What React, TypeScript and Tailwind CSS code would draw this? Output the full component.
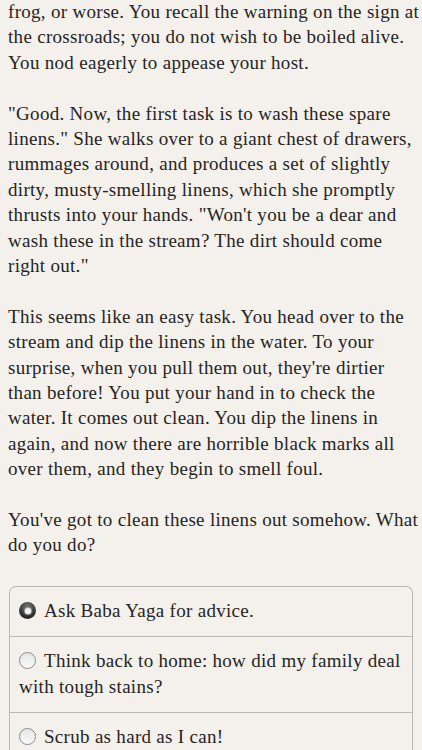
import React from "react";

const paras: string[][] = [
  [
    "frog, or worse. You recall the warning on the sign at",
    "the crossroads; you do not wish to be boiled alive.",
    "You nod eagerly to appease your host.",
  ],
  [
    "\"Good. Now, the first task is to wash these spare",
    "linens.\" She walks over to a giant chest of drawers,",
    "rummages around, and produces a set of slightly",
    "dirty, musty-smelling linens, which she promptly",
    "thrusts into your hands. \"Won't you be a dear and",
    "wash these in the stream? The dirt should come",
    "right out.\"",
  ],
  [
    "This seems like an easy task. You head over to the",
    "stream and dip the linens in the water. To your",
    "surprise, when you pull them out, they're dirtier",
    "than before! You put your hand in to check the",
    "water. It comes out clean. You dip the linens in",
    "again, and now there are horrible black marks all",
    "over them, and they begin to smell foul.",
  ],
  [
    "You've got to clean these linens out somehow. What",
    "do you do?",
  ],
];

function Radio({ checked }: { checked: boolean }) {
  if (checked) {
    return (
      <span className="relative -top-[2px] mr-[8px] inline-flex h-[17px] w-[17px] items-center justify-center rounded-full bg-[radial-gradient(circle_at_50%_30%,#777_0%,#333_60%,#111_100%)] align-middle">
        <span className="h-[6px] w-[6px] rounded-full bg-[#f2f2f2] shadow-[0_0_0_1px_#999]" />
      </span>
    );
  }
  return (
    <span className="relative -top-[2px] mr-[8px] inline-block h-[17px] w-[17px] rounded-full border border-[#8a8a8a] bg-[linear-gradient(#e6e6e6,#fafafa)] align-middle" />
  );
}

const options = [
  { text: "Ask Baba Yaga for advice.", checked: true },
  { text: "Think back to home: how did my family deal", text2: "with tough stains?", checked: false },
  { text: "Scrub as hard as I can!", checked: false },
];

export default function App() {
  return (
    <div
      className="min-h-[750px] w-[422px] overflow-hidden bg-[#f4f1ec] text-[#262422]"
      style={{ fontFamily: '"Liberation Serif", "Times New Roman", serif' }}
    >
      <div className="px-[8px] text-[19px] leading-[25.4px] tracking-[0.3px] -mt-[1px]">
        {paras.map((p, i) => (
          <p key={i} className="mb-[25.4px]">
            {p.map((l, j) => (
              <span key={j} className="block whitespace-nowrap">
                {l}
              </span>
            ))}
          </p>
        ))}
      </div>
      <div className="mx-[9px] mt-[28px] rounded-t-[7px] border-x-[1.5px] border-t-[1.5px] border-[#bab8b4] text-[19px] leading-[25.4px] tracking-[0.3px]">
        {options.map((o, i) => (
          <div
            key={i}
            className={`px-[9px] pt-[11px] pb-[13px] ${i > 0 ? "border-t-[1.5px] border-[#bab8b4]" : ""}`}
          >
            <span className="block whitespace-nowrap">
              <Radio checked={o.checked} />
              {o.text}
            </span>
            {o.text2 && <span className="block whitespace-nowrap">{o.text2}</span>}
          </div>
        ))}
      </div>
    </div>
  );
}
